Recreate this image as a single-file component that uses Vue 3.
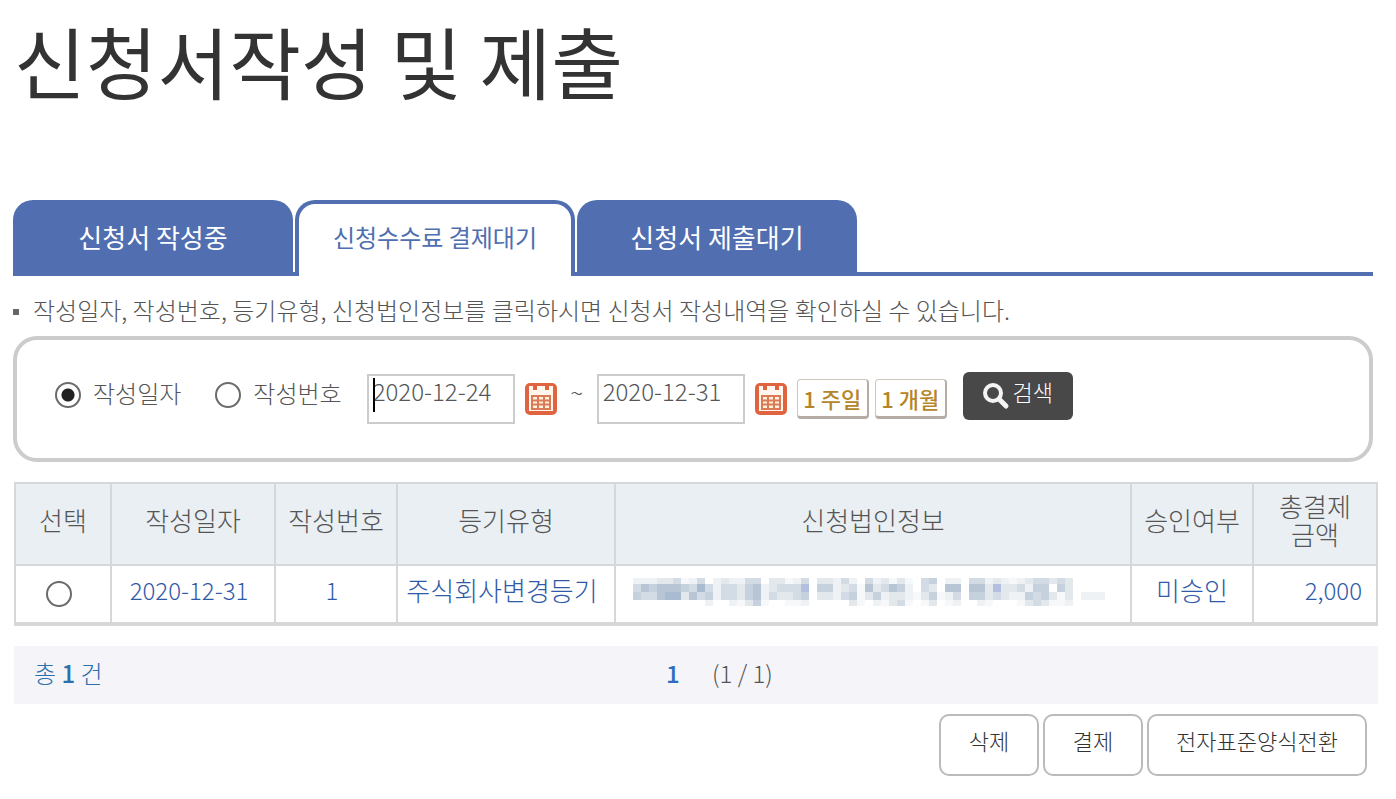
<script setup>
import { ref } from 'vue'

const tabs = [
  { label: '신청서 작성중', active: false },
  { label: '신청수수료 결제대기', active: true },
  { label: '신청서 제출대기', active: false },
]

const mode = ref('date')
const from = ref('2020-12-24')
const to = ref('2020-12-31')

const columns = [
  { label: '선택', cls: 'c-pick' },
  { label: '작성일자', cls: 'c-date' },
  { label: '작성번호', cls: 'c-no' },
  { label: '등기유형', cls: 'c-type' },
  { label: '신청법인정보', cls: 'c-corp' },
  { label: '승인여부', cls: 'c-state' },
  { label: '총결제 금액', cls: 'c-sum' },
]

// Masked company name: one character per mosaic cell, darker with the digit.
const palette = {
  1: '#f6f8f9', 2: '#eef2f5', 3: '#e2e8ec', 4: '#d3dce4',
  5: '#c5d2dd', 6: '#b7c5d5', 7: '#b2bfdf', 8: '#a9bbd0',
}
const mosaicRows = [
  { y: 0, h: 6, cells: '222334124.232244.33124.33242.423131.45.22.4423212344343' },
  { y: 6, h: 8, cells: '4656665484244356234447.552341634652.43.66.6637334255.53' },
  { y: 14, h: 8, cells: '5446883645244356243345.332451352332135124.5534322545313.222' },
  { y: 22, h: 6, cells: '.........2..21351..112.....31.21341.13.12..21...1343112' },
]
const mosaic = mosaicRows.flatMap((row) =>
  [...row.cells]
    .map((c, i) => ({ x: i * 8, y: row.y, h: row.h, fill: palette[c] }))
    .filter((cell) => cell.fill)
)
</script>

<template>
  <main class="page">
    <h1>신청서작성 및 제출</h1>

    <nav class="tabs">
      <a v-for="t in tabs" :key="t.label" href="#" class="tab" :class="{ active: t.active }">{{ t.label }}</a>
    </nav>

    <p class="note">작성일자, 작성번호, 등기유형, 신청법인정보를 클릭하시면 신청서 작성내역을 확인하실 수 있습니다.</p>

    <form class="search" @submit.prevent>
      <label class="choice"><input v-model="mode" type="radio" name="mode" value="date" class="radio" /><span>작성일자</span></label>
      <label class="choice"><input v-model="mode" type="radio" name="mode" value="no" class="radio" /><span>작성번호</span></label>
      <span class="field">
        <input v-model="from" type="text" class="date" aria-label="시작일" />
        <span class="caret"></span>
      </span>
      <button type="button" class="cal" aria-label="시작일 달력">
        <svg viewBox="0 0 34 34" width="34" height="34">
          <rect x="1" y="1" width="32" height="32" rx="5" fill="#e0643f" />
          <path d="M5 4h4v4h4V4h8v4h4V4h4v25H5z" fill="#fff6ee" />
          <path d="M8 14h18v13H8zM8 18.500h18M8 22.500h18M14 14v13M20 14v13" fill="#fff3dc" stroke="#dc7a58" stroke-width="2" />
        </svg>
      </button>
      <span class="tilde">~</span>
      <span class="field">
        <input v-model="to" type="text" class="date" aria-label="종료일" />
      </span>
      <button type="button" class="cal" aria-label="종료일 달력">
        <svg viewBox="0 0 34 34" width="34" height="34">
          <rect x="1" y="1" width="32" height="32" rx="5" fill="#e0643f" />
          <path d="M5 4h4v4h4V4h8v4h4V4h4v25H5z" fill="#fff6ee" />
          <path d="M8 14h18v13H8zM8 18.500h18M8 22.500h18M14 14v13M20 14v13" fill="#fff3dc" stroke="#dc7a58" stroke-width="2" />
        </svg>
      </button>
      <button type="button" class="range">1 주일</button>
      <button type="button" class="range">1 개월</button>
      <button type="submit" class="go">
        <svg viewBox="0 0 28 28" width="28" height="28">
          <circle cx="11" cy="11" r="8" fill="none" stroke="#f4f4f4" stroke-width="4" />
          <path d="M17 17l7 7" stroke="#f4f4f4" stroke-width="5" stroke-linecap="round" />
        </svg>
        <span>검색</span>
      </button>
    </form>

    <table class="list">
      <thead>
        <tr>
          <th v-for="c in columns" :key="c.label" :class="c.cls" scope="col">{{ c.label }}</th>
        </tr>
      </thead>
      <tbody>
        <tr>
          <td><input type="radio" name="row" class="radio" aria-label="선택" /></td>
          <td class="num"><a href="#">2020-12-31</a></td>
          <td class="num"><a href="#">1</a></td>
          <td><a href="#">주식회사변경등기</a></td>
          <td>
            <svg class="mosaic" viewBox="0 0 472 28" width="472" height="28" shape-rendering="crispEdges" aria-hidden="true">
              <rect v-for="(m, i) in mosaic" :key="i" :x="m.x" :y="m.y" width="8" :height="m.h" :fill="m.fill" />
            </svg>
          </td>
          <td class="state">미승인</td>
          <td class="num sum">2,000</td>
        </tr>
      </tbody>
    </table>

    <div class="pager">
      <span class="total">총 <b>1</b> 건</span>
      <a href="#" class="current">1</a>
      <span class="pages">(1 / 1)</span>
    </div>

    <div class="actions">
      <button type="button">삭제</button>
      <button type="button">결제</button>
      <button type="button" class="wide">전자표준양식전환</button>
    </div>
  </main>
</template>

<style>
body {
  margin: 0;
  background: #fff;
}
</style>

<style scoped>
.page,
.page button,
.page input {
  font-family: 'Noto Sans CJK KR', 'Liberation Sans', sans-serif;
  font-weight: 300;
}
.page {
  padding: 0 18px 20px 14px;
  color: #555;
  font-size: 24px;
  line-height: 28px;
}
.page *,
.page {
  box-sizing: border-box;
}
h1 {
  margin: 0;
  padding-top: 12px;
  font-size: 78px;
  line-height: 96px;
  font-weight: 400;
  color: #333;
}
.tabs {
  display: flex;
  gap: 2px;
  height: 76px;
  margin: 92px 5px 0 -1px;
  background: linear-gradient(#506eb0, #506eb0) left bottom / 100% 4px no-repeat;
}
.tab {
  width: 280px;
  padding-top: 22px;
  border-radius: 20px 20px 0 0;
  background: #506eb0;
  color: #fff;
  font-size: 26px;
  line-height: 30px;
  font-weight: 400;
  text-align: center;
  text-decoration: none;
}
.tab.active {
  padding-top: 18px;
  border: 4px solid #506eb0;
  border-bottom: 0;
  background: #fff;
  color: #506eb0;
  font-size: 24px;
}
.note {
  display: flex;
  align-items: center;
  gap: 14px;
  margin: 20px 0 0 -1px;
}
.note::before {
  content: '';
  width: 6px;
  height: 6px;
  margin-top: 4px;
  background: #666;
}
.search {
  display: flex;
  align-items: center;
  height: 126px;
  margin: 12px 5px 0 -1px;
  padding: 0 0 8px 38px;
  border: 4px solid #ccc;
  border-radius: 24px;
}
.choice {
  display: flex;
  align-items: center;
  gap: 12px;
  margin-right: 34px;
}
.choice span {
  padding-bottom: 4px;
}
.choice + .field {
  margin-left: -9px;
}
.radio {
  appearance: none;
  width: 26px;
  height: 26px;
  margin: 0;
  border: 2px solid #6b6b6b;
  border-radius: 50%;
  background: #fff;
}
.radio:checked {
  background: radial-gradient(circle, #222 6px, #fff 7px);
}
.field {
  position: relative;
  display: flex;
  margin-top: 8px;
}
.date {
  width: 148px;
  height: 50px;
  padding: 0 4px 18px;
  border: 2px solid #ccc;
  background: #fff;
  color: #555;
  font-size: 24px;
  line-height: 28px;
  outline: none;
}
.caret {
  position: absolute;
  left: 6px;
  top: 4px;
  width: 2px;
  height: 34px;
  background: #000;
}
.cal {
  display: flex;
  margin: 8px 0 0 9px;
  padding: 0;
  border: 0;
  background: none;
}
.tilde {
  width: 16px;
  margin: 0 12px 6px 11px;
  text-align: center;
}
.range {
  width: 72px;
  height: 40px;
  margin: 8px 0 0 6px;
  padding: 0;
  border: 1px solid #cfc8bf;
  border-right: 2px solid #b5ada5;
  border-bottom: 3px solid #b5ada5;
  border-radius: 4px;
  background: #fff;
  color: #b5852a;
  font-size: 22px;
  line-height: 32px;
}
.page .range {
  font-weight: 500;
}
.cal + .range {
  margin-left: 9px;
}
.go {
  display: flex;
  align-items: center;
  justify-content: center;
  width: 110px;
  height: 48px;
  margin: 2px 0 0 16px;
  padding: 0;
  border: 0;
  border-radius: 6px;
  background: #484848;
  color: #fff;
  font-size: 22px;
  line-height: 30px;
}
.go svg {
  margin: 0 2px 0 0;
}
.go span {
  padding-bottom: 10px;
}
.list {
  width: 100%;
  margin-top: 20px;
  border-collapse: collapse;
  table-layout: fixed;
  border: 2px solid #d6d7d9;
  border-bottom-width: 4px;
}
.list th,
.list td {
  padding: 0;
  border: 2px solid #d6d7d9;
  font-size: 26px;
  text-align: center;
}
.list th {
  height: 82px;
  padding: 0 12px 8px;
  background: #e9eff3;
  font-weight: 300;
  white-space: nowrap;
}
.list td {
  height: 59px;
  padding: 0 8px 8px 0;
  border-bottom-width: 4px;
  color: #2f5aa8;
}
.list td.num {
  font-size: 24px;
}
.list td.state {
  padding-right: 0;
}
.list a {
  color: #2f5aa8;
  text-decoration: none;
}
.list .radio,
.mosaic {
  display: block;
  margin: 8px auto 0;
}
.list .mosaic {
  margin-top: 4px;
}
.c-pick { width: 96px; }
.c-date { width: 164px; }
.c-no { width: 122px; }
.c-type { width: 218px; }
.c-state { width: 122px; }
.c-sum { width: 124px; }
.list th.c-sum {
  padding: 0 20px 8px;
  white-space: normal;
  word-break: keep-all;
}
.list td.sum {
  padding-right: 14px;
  text-align: right;
}
.pager {
  display: grid;
  grid-template-columns: 652px 46px auto;
  align-items: center;
  height: 58px;
  margin-top: 20px;
  padding-bottom: 4px;
  background: #f4f4f9;
}
.total {
  padding-left: 20px;
  color: #2c6fad;
}
.total b {
  font-weight: 500;
}
.current {
  color: #2f6cc0;
  font-weight: 500;
  text-decoration: none;
}
.actions {
  display: flex;
  justify-content: flex-end;
  gap: 4px;
  margin: 10px 11px 0 0;
}
.actions button {
  width: 100px;
  height: 62px;
  padding: 0 0 10px;
  border: 2px solid #bbb;
  border-radius: 10px;
  background: #fff;
  color: #333;
  font-size: 22px;
}
.actions .wide {
  width: 220px;
}
</style>
